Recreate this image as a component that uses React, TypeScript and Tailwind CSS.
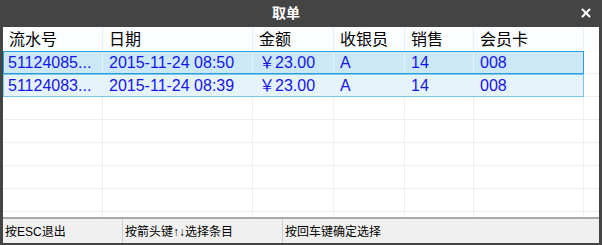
import { X } from 'lucide-react';

const cols = ['w-[100px]', 'w-[150px]', 'w-[81px]', 'w-[71px]', 'w-[69px]', 'w-[110px]'];

const headers = ['流水号', '日期', '金额', '收银员', '销售', '会员卡'];

const orders = [
  ['51124085...', '2015-11-24 08:50', '￥23.00', 'A', '14', '008'],
  ['51124083...', '2015-11-24 08:39', '￥23.00', 'A', '14', '008'],
];

export default function App() {
  return (
    <div
      className="w-[602px] h-[245px] bg-[#444444] flex flex-col select-none"
      style={{ fontFamily: '"Liberation Sans", "Noto Sans CJK SC", sans-serif' }}
    >
      {/* title bar */}
      <div className="h-[27px] shrink-0 flex items-center relative">
        <div className="flex-1 text-center pr-[30px] text-white font-bold text-[14px]">取单</div>
        <X className="absolute right-[9px] top-[6px] w-[14px] h-[14px] text-white" strokeWidth={3.5} />
      </div>

      <div className="flex-1 flex flex-col mx-[3px] mb-[2px] bg-white overflow-hidden">
        {/* grid */}
        <div className="flex-1 flex flex-col overflow-hidden">
          <div className="h-[24px] shrink-0 flex bg-[#fbfdff]">
            {headers.map((h, i) => (
              <div
                key={h}
                className={`${cols[i]} shrink-0 border-r border-[#e6eef8] pl-[6px] text-[16px] leading-[25px] text-black`}
              >
                {h}
              </div>
            ))}
            <div className="flex-1" />
          </div>

          {orders.map((row, r) => (
            <div key={r} className="h-[23px] shrink-0 flex">
              <div
                className={`w-[581px] shrink-0 flex border ${
                  r === 0 ? 'bg-[#cce8f7] border-[#26a0da]' : 'bg-[#e5f3fb] border-[#7ac6ec]'
                }`}
              >
                {row.map((v, i) => (
                  <div
                    key={i}
                    className={`${i === 0 ? 'w-[99px]' : cols[i]} shrink-0 ${
                      i < 5 ? (r === 0 ? 'border-r border-[#e4f2fb]' : 'border-r border-transparent') : ''
                    } ${i === 0 ? 'pl-[4px]' : 'pl-[6px]'} text-[16px] leading-[21px] text-[#1515ee] whitespace-nowrap overflow-hidden`}
                  >
                    {v}
                  </div>
                ))}
              </div>
              <div className="flex-1 border-b border-[#efefef]" />
            </div>
          ))}

          {Array.from({ length: 6 }).map((_, r) => (
            <div key={r} className="h-[23px] shrink-0 flex border-b border-[#efefef]">
              {cols.map((c, i) => (
                <div key={i} className={`${c} shrink-0 border-r border-[#efefef]`} />
              ))}
              <div className="flex-1" />
            </div>
          ))}
        </div>

        {/* status bar */}
        <div className="h-[26px] shrink-0 flex border-t-2 border-[#a9a9a9] bg-[#f0f0f0] text-[12px] text-black leading-[26px]">
          <div className="w-[120px] pl-[2px] border-r border-[#d0d0d0]">按ESC退出</div>
          <div className="w-[160px] pl-[2px] border-r border-[#d0d0d0]">按箭头键↑↓选择条目</div>
          <div className="flex-1 pl-[2px]">按回车键确定选择</div>
        </div>
      </div>
    </div>
  );
}
